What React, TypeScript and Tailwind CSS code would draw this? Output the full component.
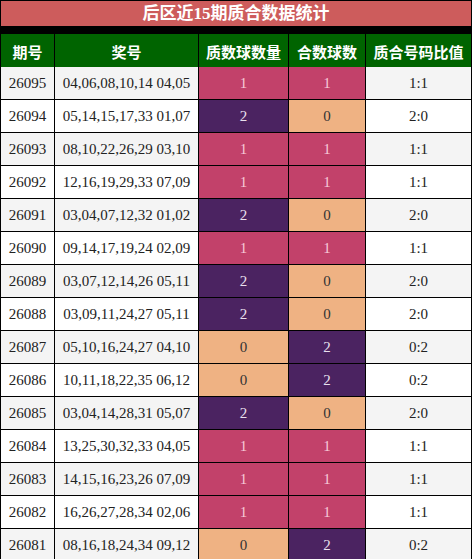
import React from "react";

type Row = [string, string, number, number];

const rows: Row[] = [
  ["26095", "04,06,08,10,14 04,05", 1, 1],
  ["26094", "05,14,15,17,33 01,07", 2, 0],
  ["26093", "08,10,22,26,29 03,10", 1, 1],
  ["26092", "12,16,19,29,33 07,09", 1, 1],
  ["26091", "03,04,07,12,32 01,02", 2, 0],
  ["26090", "09,14,17,19,24 02,09", 1, 1],
  ["26089", "03,07,12,14,26 05,11", 2, 0],
  ["26088", "03,09,11,24,27 05,11", 2, 0],
  ["26087", "05,10,16,24,27 04,10", 0, 2],
  ["26086", "10,11,18,22,35 06,12", 0, 2],
  ["26085", "03,04,14,28,31 05,07", 2, 0],
  ["26084", "13,25,30,32,33 04,05", 1, 1],
  ["26083", "14,15,16,23,26 07,09", 1, 1],
  ["26082", "16,26,27,28,34 02,06", 1, 1],
  ["26081", "08,16,18,24,34 09,12", 0, 2],
];

function valCls(v: number) {
  if (v === 1) return "bg-[#c2416a] text-[#f6cbd8]";
  if (v === 2) return "bg-[#4b2361] text-[#e9e0ee]";
  return "bg-[#efb283] text-[#333333]";
}

export default function App() {
  const font = { fontFamily: '"Liberation Serif", "Noto Sans CJK SC", serif' };
  return (
    <div
      className="w-[472px] bg-black p-px grid grid-cols-[53px_143px_89px_76px_105px] gap-px auto-rows-[32px]"
      style={font}
    >
      <div className="col-span-5 h-[25px] bg-[#cd5c5c] text-white font-bold text-[17px] flex items-center justify-center">
        后区近15期质合数据统计
      </div>
      {["期号", "奖号", "质数球数量", "合数球数", "质合号码比值"].map((h) => (
        <div
          key={h}
          className="h-[36px] bg-[#006400] text-white font-bold text-[15px] flex items-center justify-center"
          style={{ fontFamily: '"Noto Sans CJK SC", sans-serif' }}
        >
          {h}
        </div>
      ))}
      {rows.map(([id, nums, a, b], i) => {
        const bg = i % 2 === 0 ? "bg-[#f4f4f4]" : "bg-white";
        return (
          <React.Fragment key={id}>
            <div className={`${bg} text-[#222] text-[15px] flex items-center justify-center`}>{id}</div>
            <div className={`${bg} text-[#222] text-[15px] flex items-center justify-center`}>{nums}</div>
            <div className={`${valCls(a)} text-[15px] flex items-center justify-center`}>{a}</div>
            <div className={`${valCls(b)} text-[15px] flex items-center justify-center`}>{b}</div>
            <div className={`${bg} text-[#222] text-[15px] flex items-center justify-center`}>
              {`${a}:${b}`}
            </div>
          </React.Fragment>
        );
      })}
    </div>
  );
}
